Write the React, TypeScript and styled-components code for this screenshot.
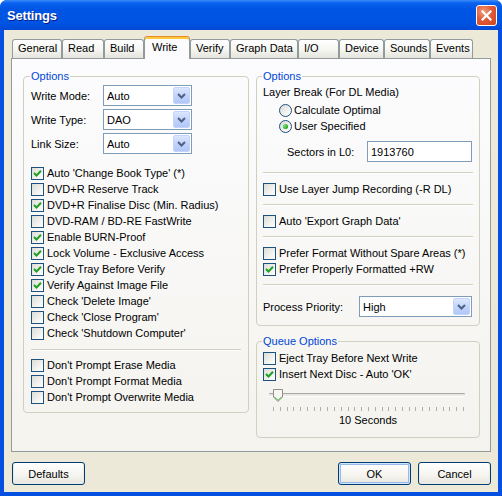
import React from 'react';
import styled, { createGlobalStyle } from 'styled-components';

// ========== Global ==========

const GlobalStyle = createGlobalStyle`
  html, body {
    margin: 0;
    padding: 0;
    background: #ffffff;
  }
  body {
    font-family: "Liberation Sans", Arial, sans-serif;
    font-size: 11px;
    color: #000;
  }
`;

// ========== Window frame ==========

const Window = styled.div`
  width: 502px;
  height: 496px;
  display: flex;
  flex-direction: column;
  background: #0550e0;
  border-radius: 7px 7px 0 0;
  overflow: hidden;
`;

const TitleBar = styled.div`
  height: 30px;
  flex: none;
  display: flex;
  align-items: center;
  justify-content: space-between;
  padding: 1px 5px 0 7px;
  box-sizing: border-box;
  background: linear-gradient(
    180deg,
    #3a8cf8 0%,
    #0a62f0 10%,
    #0055e5 30%,
    #0054e3 75%,
    #0049d4 100%
  );
`;

const Title = styled.span`
  color: #fff;
  font-weight: bold;
  font-size: 13px;
  letter-spacing: -0.2px;
  text-shadow: 1px 1px 0 #0a1f8a;
`;

const CloseButton = styled.div`
  width: 21px;
  height: 21px;
  box-sizing: border-box;
  border: 1px solid #fff;
  border-radius: 3px;
  display: flex;
  align-items: center;
  justify-content: center;
  background: radial-gradient(circle at 35% 30%, #f0a080 0%, #e25a35 45%, #cc4520 100%);
`;

const Client = styled.div`
  flex: 1;
  margin: 0 4px 4px;
  padding: 5px 7px 0;
  background: #ece9d8;
  display: flex;
  flex-direction: column;
`;

// ========== Tabs ==========

const TabStrip = styled.div`
  height: 24px;
  margin-bottom: -1px;
  padding-left: 1px;
  display: flex;
  align-items: flex-end;
  position: relative;
  z-index: 1;
`;

const Tab = styled.div<{ $w: number; $active?: boolean }>`
  width: ${(p) => p.$w}px;
  height: ${(p) => (p.$active ? 23 : 19)}px;
  margin-bottom: ${(p) => (p.$active ? 0 : 1)}px;
  box-sizing: border-box;
  flex: none;
  border: 1px solid #919b9c;
  border-bottom: none;
  border-radius: 3px 3px 0 0;
  padding: ${(p) => (p.$active ? '2px 0 0 7px' : '2px 0 0 5px')};
  white-space: nowrap;
  background: ${(p) =>
    p.$active
      ? '#fcfcfe'
      : 'linear-gradient(180deg, #ffffff 0%, #f5f5f1 55%, #e4e3dc 100%)'};
  ${(p) =>
    p.$active &&
    `
    border-top-color: #e68b2c;
    box-shadow: inset 0 2px 0 #ffc83c;
    padding-top: 4px;
  `}
`;

const Panel = styled.div`
  height: 394px;
  box-sizing: border-box;
  border: 1px solid #919b9c;
  background: linear-gradient(180deg, #fcfcfe 0%, #f4f3ee 100%);
  padding: 11px 10px 0 11px;
  display: grid;
  grid-template-columns: 226px 224px;
  column-gap: 7px;
  align-items: start;
`;

// ========== Group boxes ==========

const Column = styled.div`
  display: flex;
  flex-direction: column;
  gap: 9px;
`;

const Group = styled.fieldset<{ $pad: string }>`
  margin: 0;
  min-width: 0;
  border: 1px solid #d0d0bf;
  border-radius: 4px;
  padding: ${(p) => p.$pad};
`;

const Legend = styled.legend`
  color: #0046d5;
  padding: 0 1px;
  margin-left: -1px;
  line-height: 13px;
`;

const Stack = styled.div`
  display: flex;
  flex-direction: column;
`;

const Separator = styled.div<{ $m: string }>`
  height: 0;
  border-top: 1px solid #d0d0bf;
  border-bottom: 1px solid #ffffff;
  margin: ${(p) => p.$m};
`;

const TextRow = styled.div`
  height: 16px;
  margin-bottom: 2px;
  display: flex;
  align-items: center;
  white-space: nowrap;
`;

// ========== Field rows ==========

const FieldRow = styled.div<{ $label: number; $mt?: number; $mb?: number; $indent?: number }>`
  display: grid;
  grid-template-columns: ${(p) => p.$label}px auto;
  align-items: center;
  height: 21px;
  margin-top: ${(p) => p.$mt ?? 0}px;
  margin-bottom: ${(p) => p.$mb ?? 0}px;
  padding-left: ${(p) => p.$indent ?? 0}px;
  white-space: nowrap;
`;

const Combo = styled.div<{ $w: number }>`
  width: ${(p) => p.$w}px;
  height: 21px;
  box-sizing: border-box;
  border: 1px solid #7f9db9;
  background: #fff;
  display: flex;
  align-items: center;
  padding: 0 1px 0 3px;
`;

const ComboValue = styled.span`
  flex: 1;
`;

const ComboButton = styled.span`
  width: 17px;
  height: 17px;
  box-sizing: border-box;
  border: 1px solid #c3d3fd;
  border-radius: 2px;
  background: linear-gradient(180deg, #dce7fe 0%, #c3d4fc 50%, #b1c7f6 100%);
  display: flex;
  align-items: center;
  justify-content: center;
`;

const TextInput = styled.div<{ $w: number }>`
  width: ${(p) => p.$w}px;
  height: 21px;
  box-sizing: border-box;
  border: 1px solid #7f9db9;
  background: #fff;
  display: flex;
  align-items: center;
  padding-left: 3px;
`;

// ========== Check boxes and radios ==========

const CheckRow = styled.div<{ $indent?: number; $gap?: number }>`
  height: 16px;
  display: flex;
  align-items: center;
  gap: ${(p) => p.$gap ?? 3}px;
  padding-left: ${(p) => p.$indent ?? 0}px;
  white-space: nowrap;
`;

const Box = styled.span`
  width: 13px;
  height: 13px;
  flex: none;
  box-sizing: border-box;
  border: 1px solid #1c5180;
  background: linear-gradient(135deg, #dcdcd7 0%, #f5f5f2 70%, #ffffff 100%);
  display: flex;
  align-items: center;
  justify-content: center;
`;

const RadioCircle = styled.span`
  width: 13px;
  height: 13px;
  flex: none;
  box-sizing: border-box;
  border: 1px solid #1c5180;
  border-radius: 50%;
  background: linear-gradient(135deg, #dcdcd7 0%, #f5f5f2 70%, #ffffff 100%);
  display: flex;
  align-items: center;
  justify-content: center;
`;

const RadioDot = styled.span`
  width: 5px;
  height: 5px;
  border-radius: 50%;
  background: radial-gradient(circle at 35% 35%, #7be47a 0%, #1ea51d 70%, #11880f 100%);
`;

// ========== Slider ==========

const Slider = styled.div`
  position: relative;
  height: 26px;
  margin: 4px 8px 0 6px;
`;

const Track = styled.div`
  height: 2px;
  margin-top: 7px;
  border-top: 1px solid #a7a6aa;
  border-bottom: 1px solid #ffffff;
  background: #e8e7e1;
  border-radius: 1px;
`;

const Ticks = styled.div`
  display: flex;
  justify-content: space-between;
  margin: 10px 1px 0 4px;
`;

const Tick = styled.span`
  width: 1px;
  height: 4px;
  background: #aeada8;
`;

const Thumb = styled.svg`
  position: absolute;
  left: 4px;
  top: 3px;
`;

const Caption = styled.div`
  height: 12px;
  line-height: 12px;
  margin-top: 2px;
  text-align: center;
`;

// ========== Buttons ==========

const ButtonBar = styled.div`
  display: flex;
  align-items: center;
  gap: 7px;
  margin-top: 10px;
  padding-left: 1px;
`;

const Spacer = styled.div`
  flex: 1;
`;

const Button = styled.div<{ $default?: boolean }>`
  width: 73px;
  height: 23px;
  box-sizing: border-box;
  border: 1px solid #003c74;
  border-radius: 3px;
  display: flex;
  align-items: center;
  justify-content: center;
  background: linear-gradient(180deg, #ffffff 0%, #f5f4ef 60%, #e6e4dc 100%);
  box-shadow: ${(p) =>
    p.$default
      ? 'inset 0 0 0 1px #cee7ff, inset 0 0 0 2px #98b8ea'
      : 'inset 0 -1px 0 1px #ebeae3'};
`;

// ========== Small drawings ==========

function CloseGlyph() {
  return (
    <svg width="11" height="11" viewBox="0 0 11 11">
      <path d="M1.5 1.5 L9.5 9.5 M9.5 1.5 L1.5 9.5" stroke="#fff" strokeWidth="2.2" strokeLinecap="square" />
    </svg>
  );
}

function Chevron() {
  return (
    <svg width="9" height="6" viewBox="0 0 9 6">
      <path d="M1 1 L4.5 4.5 L8 1" fill="none" stroke="#4d6185" strokeWidth="2" />
    </svg>
  );
}

function CheckMark() {
  return (
    <svg width="9" height="9" viewBox="0 0 9 9">
      <path d="M1 4 L3.5 6.5 L8 1.8" fill="none" stroke="#21a121" strokeWidth="2" />
    </svg>
  );
}

// ========== Controls ==========

function Check({ label, on }: { label: string; on?: boolean }) {
  return (
    <CheckRow>
      <Box>{on && <CheckMark />}</Box>
      <span>{label}</span>
    </CheckRow>
  );
}

function Radio({ label, on }: { label: string; on?: boolean }) {
  return (
    <CheckRow $indent={16} $gap={2}>
      <RadioCircle>{on && <RadioDot />}</RadioCircle>
      <span>{label}</span>
    </CheckRow>
  );
}

function ComboField({ label, value, labelWidth, width, mt, mb }: {
  label: string;
  value: string;
  labelWidth: number;
  width: number;
  mt?: number;
  mb?: number;
}) {
  return (
    <FieldRow $label={labelWidth} $mt={mt} $mb={mb}>
      <span>{label}</span>
      <Combo $w={width}>
        <ComboValue>{value}</ComboValue>
        <ComboButton>
          <Chevron />
        </ComboButton>
      </Combo>
    </FieldRow>
  );
}

// ========== Data ==========

const TABS = [
  { label: 'General', w: 50 },
  { label: 'Read', w: 42 },
  { label: 'Build', w: 40 },
  { label: 'Write', w: 46, active: true },
  { label: 'Verify', w: 40 },
  { label: 'Graph Data', w: 68 },
  { label: 'I/O', w: 41 },
  { label: 'Device', w: 45 },
  { label: 'Sounds', w: 46 },
  { label: 'Events', w: 43 },
];

const WRITE_CHECKS = [
  { label: "Auto 'Change Book Type' (*)", on: true },
  { label: 'DVD+R Reserve Track', on: false },
  { label: 'DVD+R Finalise Disc (Min. Radius)', on: true },
  { label: 'DVD-RAM / BD-RE FastWrite', on: false },
  { label: 'Enable BURN-Proof', on: true },
  { label: 'Lock Volume - Exclusive Access', on: true },
  { label: 'Cycle Tray Before Verify', on: true },
  { label: 'Verify Against Image File', on: true },
  { label: "Check 'Delete Image'", on: false },
  { label: "Check 'Close Program'", on: false },
  { label: "Check 'Shutdown Computer'", on: false },
];

const PROMPT_CHECKS = [
  "Don't Prompt Erase Media",
  "Don't Prompt Format Media",
  "Don't Prompt Overwrite Media",
];

// ========== Page ==========

export default function App() {
  return (
    <>
      <GlobalStyle />
      <Window>
        <TitleBar>
          <Title>Settings</Title>
          <CloseButton>
            <CloseGlyph />
          </CloseButton>
        </TitleBar>

        <Client>
          <TabStrip>
            {TABS.map((t) => (
              <Tab key={t.label} $w={t.w} $active={t.active}>
                {t.label}
              </Tab>
            ))}
          </TabStrip>

          <Panel>
            <Group $pad="2px 7px 7px">
              <Legend>Options</Legend>
              <Stack>
                <ComboField label="Write Mode:" value="Auto" labelWidth={72} width={89} mb={3} />
                <ComboField label="Write Type:" value="DAO" labelWidth={72} width={89} mb={3} />
                <ComboField label="Link Size:" value="Auto" labelWidth={72} width={89} mb={11} />
                {WRITE_CHECKS.map((c) => (
                  <Check key={c.label} label={c.label} on={c.on} />
                ))}
                <Separator $m="8px 0 6px" />
                {PROMPT_CHECKS.map((label) => (
                  <Check key={label} label={label} />
                ))}
              </Stack>
            </Group>

            <Column>
              <Group $pad="1px 6px 8px">
                <Legend>Options</Legend>
                <Stack>
                  <TextRow>Layer Break (For DL Media)</TextRow>
                  <Radio label="Calculate Optimal" />
                  <Radio label="User Specified" on />
                  <FieldRow $label={80} $mt={7} $indent={24}>
                    <span>Sectors in L0:</span>
                    <TextInput $w={105}>1913760</TextInput>
                  </FieldRow>
                  <Separator $m="10px 0 7px" />
                  <Check label="Use Layer Jump Recording (-R DL)" />
                  <Separator $m="7px 0" />
                  <Check label="Auto 'Export Graph Data'" />
                  <Separator $m="7px 0" />
                  <Check label="Prefer Format Without Spare Areas (*)" />
                  <Check label="Prefer Properly Formatted +RW" on />
                  <Separator $m="7px 0 0" />
                  <ComboField label="Process Priority:" value="High" labelWidth={96} width={113} mt={10} />
                </Stack>
              </Group>

              <Group $pad="2px 6px 11px">
                <Legend>Queue Options</Legend>
                <Stack>
                  <Check label="Eject Tray Before Next Write" />
                  <Check label="Insert Next Disc - Auto 'OK'" on />
                  <Slider>
                    <Track />
                    <Ticks>
                      {Array.from({ length: 29 }, (_, i) => (
                        <Tick key={i} />
                      ))}
                    </Ticks>
                    <Thumb width="11" height="13" viewBox="0 0 11 13">
                      <path
                        d="M0.5 0.5 H9.5 V8 L5 12.5 L0.5 8 Z"
                        fill="#f7f7f3"
                        stroke="#8f8f85"
                      />
                      <path d="M1.5 8 L5 11.3 L8.5 8" fill="none" stroke="#3fbb3c" strokeWidth="1" />
                    </Thumb>
                  </Slider>
                  <Caption>10 Seconds</Caption>
                </Stack>
              </Group>
            </Column>
          </Panel>

          <ButtonBar>
            <Button>Defaults</Button>
            <Spacer />
            <Button $default>OK</Button>
            <Button>Cancel</Button>
          </ButtonBar>
        </Client>
      </Window>
    </>
  );
}
